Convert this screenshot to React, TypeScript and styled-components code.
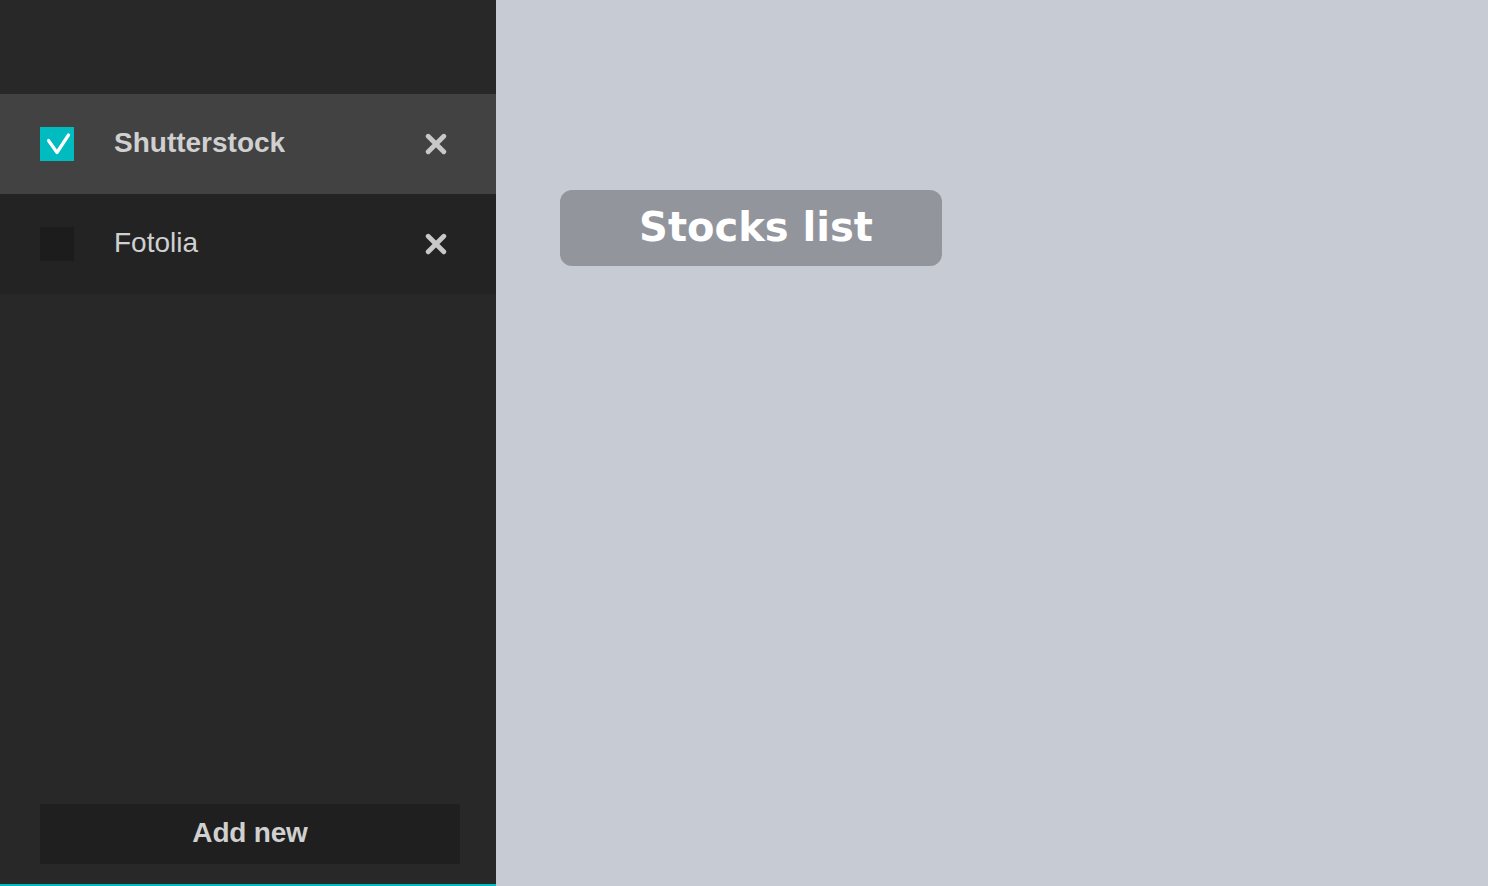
import React from "react";
import styled, { createGlobalStyle } from "styled-components";

const Global = createGlobalStyle`
  html, body { margin: 0; padding: 0; height: 100%; }
  body { font-family: "Liberation Sans", Arial, sans-serif; }
  #root { height: 100%; }
`;

const Page = styled.div`
  display: flex;
  width: 100%;
  height: 886px;
  overflow: hidden;
`;

const Sidebar = styled.aside`
  width: 496px;
  flex-shrink: 0;
  background: #282828;
  display: flex;
  flex-direction: column;
  padding-top: 94px;
  box-sizing: border-box;
  border-bottom: 2px solid #00bcc0;
`;

const List = styled.ul`
  list-style: none;
  margin: 0;
  padding: 0;
  flex: 1;
`;

const Row = styled.li<{ $active?: boolean }>`
  height: 100px;
  display: flex;
  align-items: center;
  padding: 0 40px;
  background: ${(p) => (p.$active ? "#424242" : "#232323")};
`;

const Check = styled.span<{ $checked?: boolean }>`
  width: 34px;
  height: 34px;
  flex-shrink: 0;
  background: ${(p) => (p.$checked ? "#00bcc0" : "#1c1c1c")};
  display: flex;
  align-items: center;
  justify-content: center;
`;

const Label = styled.span<{ $bold?: boolean }>`
  flex: 1;
  margin-left: 40px;
  margin-top: -2px;
  font-size: 28px;
  font-weight: ${(p) => (p.$bold ? 700 : 400)};
  color: #d0d0d0;
`;

const Remove = styled.span`
  width: 22px;
  height: 22px;
  margin-right: 9px;
  display: flex;
`;

const Footer = styled.div`
  padding: 0 36px 20px 40px;
`;

const AddButton = styled.button`
  width: 420px;
  height: 60px;
  border: none;
  background: #1f1f1f;
  color: #d0d0d0;
  font-family: "Liberation Sans", Arial, sans-serif;
  font-weight: 700;
  font-size: 28px;
  letter-spacing: -0.2px;
  padding: 0 0 2px 0;
  cursor: pointer;
`;

const Main = styled.main`
  flex: 1;
  background: #c7cbd4;
  padding: 190px 0 0 64px;
`;

const Title = styled.div`
  width: 382px;
  height: 76px;
  border-radius: 12px;
  background: #93959d;
  color: #ffffff;
  font-family: "DejaVu Sans", Verdana, sans-serif;
  font-weight: 700;
  font-size: 40px;
  display: flex;
  align-items: center;
  justify-content: center;
  padding: 0 0 3px 10px;
  box-sizing: border-box;
`;

const CheckMark = () => (
  <svg width="34" height="34" viewBox="0 0 34 34">
    <path d="M8.5 13.5 L17 25.5 L28.5 8" fill="none" stroke="#fff" strokeWidth="3.2" strokeLinecap="round" strokeLinejoin="round" />
  </svg>
);

const Cross = () => (
  <svg width="22" height="22" viewBox="0 0 22 22">
    <path d="M3.2 3.2 L18.8 18.8 M18.8 3.2 L3.2 18.8" stroke="#c8c8c8" strokeWidth="4.8" strokeLinecap="round" />
  </svg>
);

const items = [
  { name: "Shutterstock", checked: true },
  { name: "Fotolia", checked: false },
];

export default function App() {
  return (
    <>
      <Global />
      <Page>
        <Sidebar>
          <List>
            {items.map((it) => (
              <Row key={it.name} $active={it.checked}>
                <Check $checked={it.checked}>{it.checked && <CheckMark />}</Check>
                <Label $bold={it.checked}>{it.name}</Label>
                <Remove>
                  <Cross />
                </Remove>
              </Row>
            ))}
          </List>
          <Footer>
            <AddButton>Add new</AddButton>
          </Footer>
        </Sidebar>
        <Main>
          <Title>Stocks list</Title>
        </Main>
      </Page>
    </>
  );
}
